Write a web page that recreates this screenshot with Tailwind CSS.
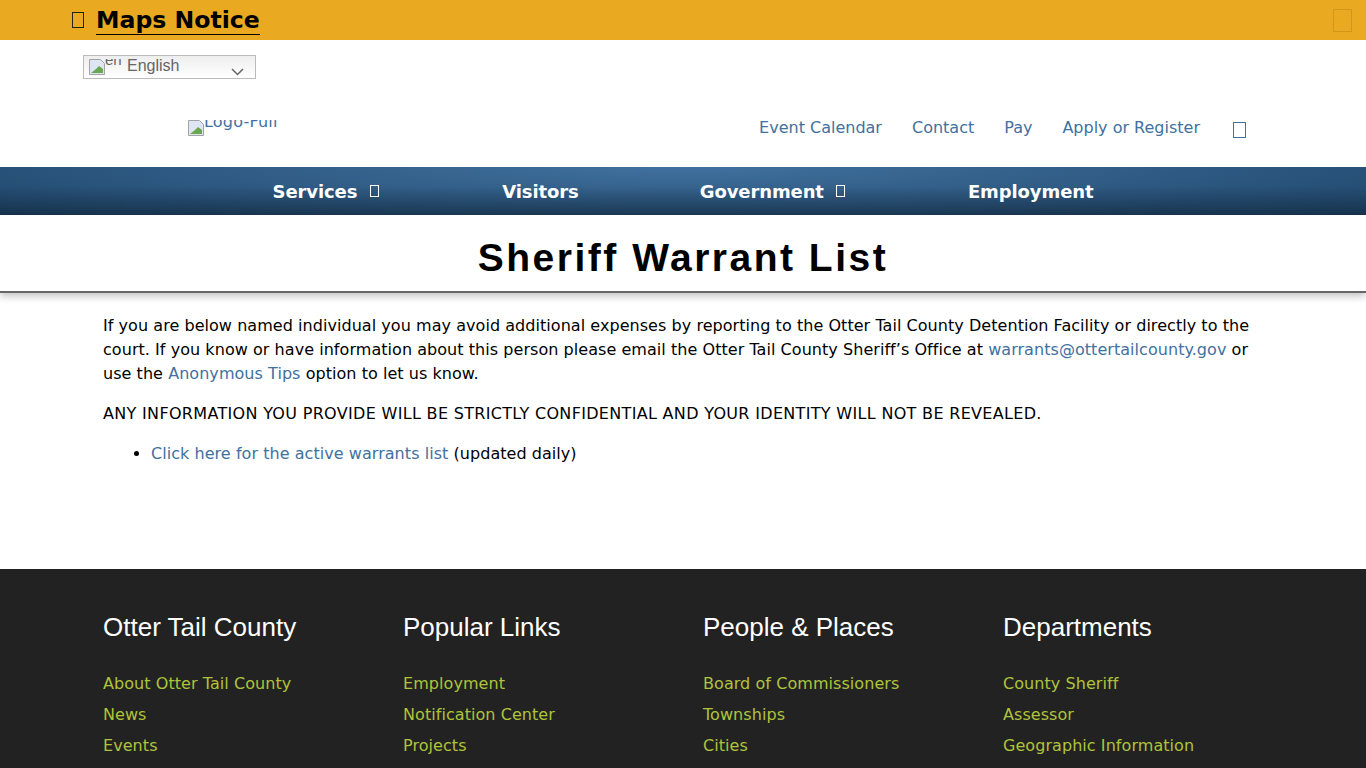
<!doctype html>
<html lang="en">
  <head>
    <meta charset="utf-8" />
    <script src="https://cdn.jsdelivr.net/npm/@tailwindcss/browser@4"></script>
    <title>Sheriff Warrant List</title>
  </head>
  <body class="h-[768px] overflow-hidden bg-white font-['DejaVu_Sans',sans-serif] text-[16px] text-black">
    <!-- notice bar -->
    <div class="flex h-10 items-center justify-between bg-[#e9a920] pl-[72px] pr-[14px]">
      <div class="flex items-center">
        <span class="mr-3 h-4 w-3 border border-[#222]"></span>
        <a href="#" class="mt-px border-b border-black text-[23.6px] leading-[27px] font-bold text-black">Maps Notice</a>
      </div>
      <span class="h-[23px] w-[19px] border border-[#d2971a]"></span>
    </div>

    <!-- language picker -->
    <div class="h-[53px] pl-[83px] pt-[15px]">
      <div class="flex h-6 w-[173px] items-center border border-[#bbb] bg-gradient-to-b from-[#eee] to-white pl-[5px] font-['Liberation_Sans',sans-serif] text-[16px] text-[#666]">
        <div class="flex h-4 w-[38px] overflow-hidden">
          <svg width="16" height="16" viewBox="0 0 16 16" class="shrink-0"><path d="M.5.5h11l4 4v11H.5z" fill="#dfe6f3" stroke="#a3a3a3"/><path d="M2 14l5-4 3-3 4 3v4z" fill="#6aa84f"/></svg>
          <span class="-mt-[7px] text-[15px] leading-4">en</span>
        </div>
        <span class="-mt-[2px] leading-5">English</span>
        <svg width="13" height="8" viewBox="0 0 13 8" class="ml-[52px] mt-[10px]"><path d="M1 1l5.500 5.500 5.500-5.500" fill="none" stroke="#666" stroke-width="1.5"/></svg>
      </div>
    </div>

    <!-- header -->
    <header class="flex h-[74px] items-center justify-between pb-1 pl-[188px] pr-[120px]">
      <a href="#" class="flex h-4 overflow-hidden text-[#41719f]">
        <svg width="16" height="16" viewBox="0 0 16 16" class="shrink-0"><path d="M.5.5h11l4 4v11H.5z" fill="#dfe6f3" stroke="#a3a3a3"/><path d="M2 14l5-4 3-3 4 3v4z" fill="#6aa84f"/></svg>
        <span class="-mt-[6px] tracking-[0.2px] leading-4">Logo-Full</span>
      </a>
      <nav class="flex items-center gap-[30px] text-[#41719f]">
        <a href="#">Event Calendar</a>
        <a href="#">Contact</a>
        <a href="#">Pay</a>
        <a href="#">Apply or Register</a>
        <span class="ml-[3px] mt-1 h-4 w-[13px] border border-[#41719f]"></span>
      </nav>
    </header>

    <!-- main nav -->
    <nav class="flex h-12 items-center justify-center bg-[linear-gradient(to_bottom,transparent_40%,rgba(15,30,45,0.45)),radial-gradient(ellipse_at_top,#41719f,#1d4468)] text-[18px] font-bold tracking-[-0.1px] text-white">
      <a href="#" class="flex items-center gap-[13px] px-[60px]">Services <span class="h-3 w-[9px] border border-white"></span></a>
      <a href="#" class="ml-[3px] px-[60px]">Visitors</a>
      <a href="#" class="ml-px flex items-center gap-[12px] px-[60px]">Government <span class="h-3 w-[9px] border border-white"></span></a>
      <a href="#" class="ml-[3px] px-[60px]">Employment</a>
    </nav>

    <!-- page title -->
    <div class="flex h-[78px] items-center justify-center border-b-2 border-[#666] pt-[10px] shadow-[0_3px_8px_rgba(0,0,0,0.25)]">
      <h1 class="font-['Liberation_Sans',sans-serif] text-[39px] font-bold tracking-[2.5px]">Sheriff Warrant List</h1>
    </div>

    <main class="h-[276px] px-[103px] pt-[21px] leading-6 tracking-[0.05px]">
      <p class="mb-4">If you are below named individual you may avoid additional expenses by reporting to the Otter Tail County Detention Facility or directly to the court. If you know or have information about this person please email the Otter Tail County Sheriff’s Office at <a href="#" class="text-[#41719f]">warrants@ottertailcounty.gov</a> or use the <a href="#" class="text-[#41719f]">Anonymous Tips</a> option to let us know.</p>
      <p class="mb-4 tracking-[0.32px]">ANY INFORMATION YOU PROVIDE WILL BE STRICTLY CONFIDENTIAL AND YOUR IDENTITY WILL NOT BE REVEALED.</p>
      <ul class="list-disc pl-12">
        <li><a href="#" class="text-[#41719f]">Click here for the active warrants list</a> (updated daily)</li>
      </ul>
    </main>

    <!-- footer -->
    <footer class="grid h-[199px] grid-cols-[repeat(4,300px)] bg-[#222] px-[103px] pt-[40px] tracking-[0.06px] text-[#afc43a]">
      <div class="flex flex-col">
        <h3 class="mb-[27px] font-['Liberation_Sans',sans-serif] text-[26px] leading-9 tracking-normal text-white">Otter Tail County</h3>
        <a href="#" class="mb-[7px] leading-6">About Otter Tail County</a>
        <a href="#" class="mb-[7px] leading-6">News</a>
        <a href="#" class="leading-6">Events</a>
      </div>
      <div class="flex flex-col">
        <h3 class="mb-[27px] font-['Liberation_Sans',sans-serif] text-[26px] leading-9 tracking-normal text-white">Popular Links</h3>
        <a href="#" class="mb-[7px] leading-6">Employment</a>
        <a href="#" class="mb-[7px] leading-6">Notification Center</a>
        <a href="#" class="leading-6">Projects</a>
      </div>
      <div class="flex flex-col">
        <h3 class="mb-[27px] font-['Liberation_Sans',sans-serif] text-[26px] leading-9 tracking-normal text-white">People &amp; Places</h3>
        <a href="#" class="mb-[7px] leading-6">Board of Commissioners</a>
        <a href="#" class="mb-[7px] leading-6">Townships</a>
        <a href="#" class="leading-6">Cities</a>
      </div>
      <div class="flex flex-col">
        <h3 class="mb-[27px] font-['Liberation_Sans',sans-serif] text-[26px] leading-9 tracking-normal text-white">Departments</h3>
        <a href="#" class="mb-[7px] leading-6">County Sheriff</a>
        <a href="#" class="mb-[7px] leading-6">Assessor</a>
        <a href="#" class="leading-6">Geographic Information</a>
      </div>
    </footer>
  </body>
</html>
